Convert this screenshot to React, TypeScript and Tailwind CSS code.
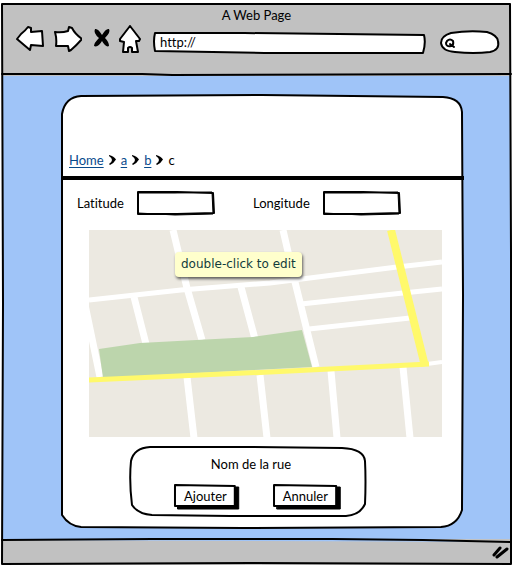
import type { ReactNode } from "react";

type SketchProps = {
  box: string;
  d: string;
  fill?: string;
  stroke?: number;
};

/* Hand-drawn outline that stretches behind its parent's content. */
function Sketch({ box, d, fill = "none", stroke = 2 }: SketchProps) {
  return (
    <svg
      aria-hidden="true"
      className="pointer-events-none absolute inset-0 h-full w-full overflow-visible"
      viewBox={box}
      preserveAspectRatio="none"
    >
      <path
        d={d}
        fill={fill}
        stroke="#000"
        strokeWidth={stroke}
        strokeLinejoin="round"
        strokeLinecap="round"
        vectorEffect="non-scaling-stroke"
      />
    </svg>
  );
}

function NavButton({ label, className, children }: { label: string; className: string; children: ReactNode }) {
  return (
    <button type="button" aria-label={label} className={`shrink-0 ${className}`}>
      {children}
    </button>
  );
}

function BrowserBar() {
  return (
    <header className="relative h-[73px] bg-[#c1c1c1]">
      <h1 className="pt-0.5 text-center text-[13px] leading-5">A Web Page</h1>
      <div className="flex h-7 items-center pr-3 pl-3">
        <NavButton label="Back" className="h-7 w-8">
          <svg width="32" height="28" viewBox="0 0 32 28" fill="#fff" stroke="#000" strokeWidth="2" strokeLinejoin="round">
            <path d="M3 14 7 9Q11 6 14 2L17 3V7L28 6 29 21 17 20 16 25Q10 20 3 14Z" />
          </svg>
        </NavButton>
        <NavButton label="Forward" className="ml-1 h-7 w-8">
          <svg width="32" height="28" viewBox="0 0 32 28" fill="#fff" stroke="#000" strokeWidth="2" strokeLinejoin="round">
            <path d="M5 7Q12 8 18 6L19 2 22 3Q25 9 32 14 27 20 21 25L19 26 18 21 6 21Q7 14 5 7Z" />
          </svg>
        </NavButton>
        <NavButton label="Stop" className="ml-2.5 h-7 w-5">
          <svg width="20" height="28" viewBox="0 0 20 28">
            <path d="M3 4Q6 3 10 10 14 3 17 4 19 7 13 13 17 17 17 21 14 23 10 16 6 23 2 21 2 18 7 13 1 8 3 4Z" />
          </svg>
        </NavButton>
        <NavButton label="Home page" className="ml-1 h-7 w-7">
          <svg width="28" height="28" viewBox="0 0 28 28" fill="#fff" stroke="#000" strokeWidth="2" strokeLinejoin="round">
            <path d="M14 1 24 14 23 16 20 16 22 27H16V23Q14 21 12 23V27H7L8 17 4 16 4 14Z" />
          </svg>
        </NavButton>
        <div className="relative mt-2 ml-2.5 h-5 min-w-0 flex-1">
          <Sketch box="0 0 270 20" fill="#fff" d="M1 0 90 0 269 2q2 8-1 18L110 20 1 18Q-1 8 1 0Z" />
          <input
            aria-label="Address"
            defaultValue="http://"
            className="relative block h-[18px] w-full bg-transparent px-1.5 text-[13px] leading-[18px] outline-none"
          />
        </div>
        <div className="relative mt-2 ml-4 h-6 w-[58px] shrink-0">
          <Sketch box="0 0 58 24" fill="#fff" d="M10 2Q28-1 46 1q10 3 11 9 2 9-8 11-16 2-35 0Q1 20 0 12 0 5 10 2Z" />
          <svg aria-hidden="true" className="absolute top-[7px] left-1" width="12" height="12" viewBox="0 0 12 12" fill="none" stroke="#000" strokeWidth="2" strokeLinecap="round">
            <path d="M2 3q3-3 6 0 1 4-2 5-5 1-5-3ZM5 6l4 3" />
          </svg>
          <input
            type="search"
            aria-label="Search"
            className="relative block h-6 w-full bg-transparent pr-2 pl-5 text-[13px] outline-none"
          />
        </div>
      </div>
      <Sketch box="0 0 508 73" stroke={2} d="M0 71 140 71 170 72 508 71" />
    </header>
  );
}

function Chevron() {
  return (
    <svg aria-hidden="true" width="7" height="10" viewBox="0 0 7 10">
      <path d="M0 0Q5 1 7 4.500 5 8 1 10L0 9Q3 7 3 5 3 3 0 1Z" />
    </svg>
  );
}

function Breadcrumbs() {
  const link = "text-[#084a8c] underline underline-offset-2";
  return (
    <nav aria-label="Breadcrumb" className="flex h-[81px] items-end px-2 pb-0.5 text-[13px] leading-5">
      <ol className="flex items-center gap-[5px] pb-1">
        <li><a href="#home" className={link}>Home</a></li>
        <li><Chevron /></li>
        <li><a href="#a" className={link}>a</a></li>
        <li><Chevron /></li>
        <li><a href="#b" className={link}>b</a></li>
        <li><Chevron /></li>
        <li aria-current="page">c</li>
      </ol>
    </nav>
  );
}

function Field({ id, label, width }: { id: string; label: string; width: string }) {
  return (
    <div className="flex items-center">
      <label htmlFor={id} className={width}>{label}</label>
      <span className="relative h-6 w-[77px]">
        <Sketch box="0 0 77 24" fill="#fff" stroke={2} d="M1 1 40 1 76 2 77 22 40 23 1 23Z" />
        <Sketch box="0 0 77 24" stroke={1} d="M1 2 38 2 75 1 76 23 38 24 1 22Z" />
        <input id={id} className="relative block h-6 w-full bg-transparent px-1 text-[13px] outline-none" />
      </span>
    </div>
  );
}

function StreetMap() {
  return (
    <div className="relative mr-[21px] ml-7 mt-[15px]">
      <svg role="img" aria-label="Street map" className="block h-auto w-full" viewBox="0 0 353 207" fill="none">
        <path fill="#ece9e1" d="M0 0H353V207H0Z" />
        <g stroke="#fff" strokeWidth="7">
          <path d="M-5 70 11 147M45 67 57 114M84 0 98 58 113 110M152 57 166 109M194 0 206 52 227 137" />
          <path d="M98 147 105 208M171 145 178 208M242 141 248 208M314 137 321 208" />
          <path strokeWidth="5" d="M0 70 92 60 181 53 308 37 353 32" />
          <path strokeWidth="5" d="M212 74 314 63 353 59M220 99 321 88" />
          <path strokeWidth="4" d="M338 134 353 132" />
        </g>
        <path fill="#bcd5ac" d="M10 119 51 113 164 107 213 100 223 137 14 148Z" />
        <g stroke="#fff96b">
          <path strokeWidth="5" d="M0 150 181 142 340 134" />
          <path strokeWidth="8" d="M302 0 336 136" />
        </g>
      </svg>
      <span
        role="tooltip"
        className="absolute top-[22px] left-[86px] rounded-sm bg-[#ffffcc] px-1.5 font-['DejaVu_Sans',sans-serif] text-[12px] leading-[25px] whitespace-nowrap text-[#123c3c] shadow-[1px_2px_3px_rgba(0,0,0,0.6)]"
      >
        double-click to edit
      </span>
    </div>
  );
}

function ActionButton({ children }: { children: ReactNode }) {
  return (
    <button type="button" className="relative h-6 px-2.5 leading-5">
      <Sketch box="0 0 64 24" fill="#000" stroke={1} d="M4 3H66V25H4Z" />
      <Sketch box="0 0 64 24" fill="#fff" d="M1 1 62 2V22L1 22Z" />
      <span className="relative">{children}</span>
    </button>
  );
}

function Panel() {
  return (
    <main className="relative mt-[19px] mr-12 ml-[59px] h-[434px]">
      <Sketch
        box="0 0 400 434"
        fill="#fff"
        d="M1 19Q4 2 20 1L200 0 380 2Q398 3 399 17L400 200 399 415Q394 431 378 432L180 433 20 432Q8 431 1 420L1 220Z"
      />
      <div className="relative">
        <Breadcrumbs />
        <hr className="-mr-px border-t-4 border-black" />
        <form onSubmit={(event) => event.preventDefault()} className="text-[13px] leading-5">
          <div className="flex gap-[39px] pt-[11px] pl-4">
            <Field id="latitude" label="Latitude" width="w-[60px]" />
            <Field id="longitude" label="Longitude" width="w-[70px]" />
          </div>
          <StreetMap />
          <fieldset className="relative mt-[9px] mr-[97px] ml-[69px] h-[71px]">
            <Sketch box="0 0 236 71" d="M1 15Q4 2 20 1L120 1 212 2Q234 3 235 15 236 35 235 58 230 69 216 70L100 70 22 69Q8 68 2 59-1 35 1 15Z" />
            <div className="relative flex flex-col items-center pt-2 pl-1.5">
              <p>Nom de la rue</p>
              <div className="flex gap-9 pt-2.5 pl-2.5">
                <ActionButton>Ajouter</ActionButton>
                <ActionButton>Annuler</ActionButton>
              </div>
            </div>
          </fieldset>
        </form>
      </div>
    </main>
  );
}

export default function App() {
  return (
    <div className="bg-white pt-[3px] pr-0.5 pb-1 pl-0.5 font-['Lato','Noto_Sans',sans-serif] text-black [font-variant-ligatures:none]">
      <div className="relative bg-[#9fc4f8]">
        <BrowserBar />
        <Panel />
        <footer className="relative mt-2.5 flex h-[26px] items-center justify-end bg-[#c1c1c1] pr-0.5">
          <Sketch box="0 0 508 26" d="M0 1 150 0 330 0 420 1 508 3" fill="#9fc4f8" stroke={2} />
          <svg aria-hidden="true" className="relative" width="18" height="14" viewBox="0 0 18 14" stroke="#000" strokeWidth="3" strokeLinecap="round">
            <path d="M3 10 9 3M6 12 16 4" />
          </svg>
        </footer>
        <Sketch box="0 0 509 562" stroke={2} d="M0 1 508 1 509 250 509 561 250 560 0 561 1 300Z" />
      </div>
    </div>
  );
}
